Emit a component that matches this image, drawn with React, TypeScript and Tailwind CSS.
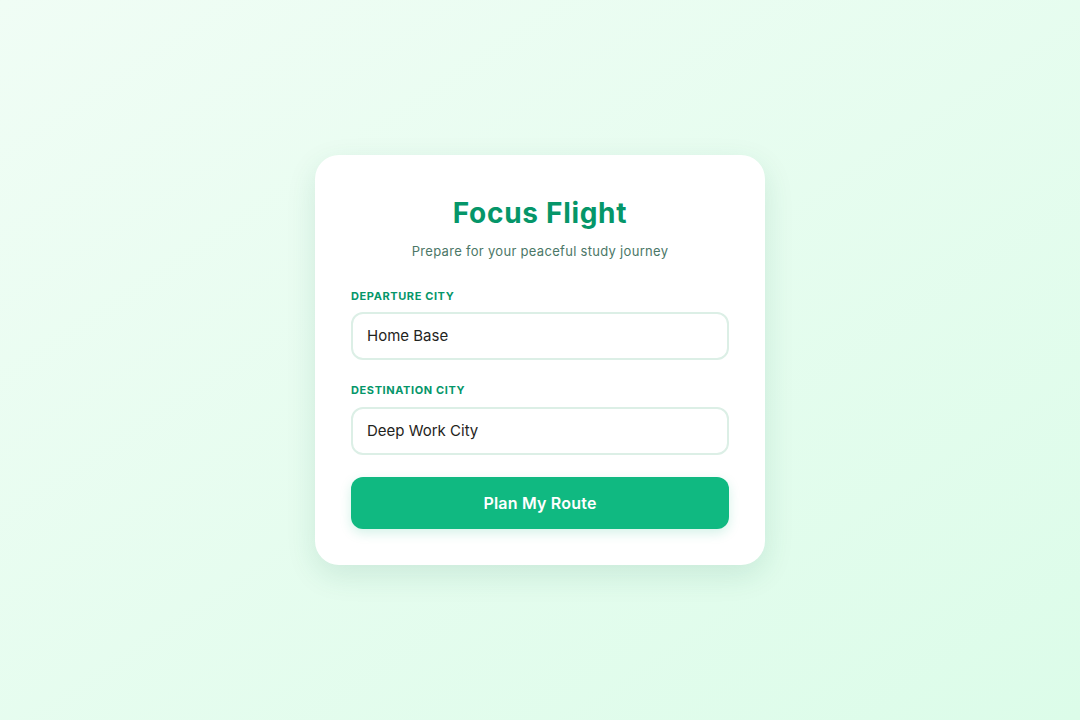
import React from "react";

export default function App() {
  return (
    <div
      className="w-[1080px] h-[720px] flex items-center justify-center bg-gradient-to-br from-[#f0fdf5] to-[#dcfce9]"
      style={{ fontFamily: "Inter, 'Open Sans', sans-serif" }}
    >
      <div className="w-[450px] h-[410px] bg-white rounded-[24px] shadow-[0_10px_30px_rgba(16,100,70,0.12)] px-[36px] pt-[40px] flex flex-col">
        <h1 className="text-center text-[28px] leading-[36px] font-bold text-[#059669] tracking-[0.7px]">
          Focus Flight
        </h1>
        <p className="text-center text-[13px] leading-[20px] text-[#4b7767] mt-[10px] tracking-[0.3px]">
          Prepare for your peaceful study journey
        </p>
        <label className="mt-[27px] text-[11px] leading-[16px] font-bold tracking-[0.6px] text-[#059669]">
          DEPARTURE CITY
        </label>
        <div className="mt-[8px] h-[48px] rounded-[12px] border-2 border-[#dcefe6] flex items-center px-[14px] text-[15px] text-[#1f2421]">
          Home Base
        </div>
        <label className="mt-[22px] text-[11px] leading-[16px] font-bold tracking-[0.6px] text-[#059669]">
          DESTINATION CITY
        </label>
        <div className="mt-[9px] h-[48px] rounded-[12px] border-2 border-[#dcefe6] flex items-center px-[14px] text-[15px] text-[#1f2421]">
          Deep Work City
        </div>
        <button className="mt-[22px] h-[52px] rounded-[12px] bg-[#10b981] text-white text-[16px] font-semibold tracking-[0.2px] shadow-[0_4px_12px_rgba(16,185,129,0.18)]">
          Plan My Route
        </button>
      </div>
    </div>
  );
}
